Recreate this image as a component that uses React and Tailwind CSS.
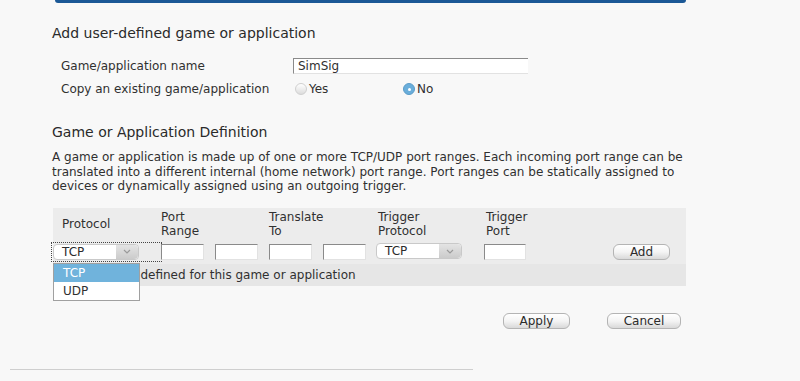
const font = { fontFamily: '"DejaVu Sans", Verdana, sans-serif' };

const TextInput = ({ className = "" }) => (
    <div
        className={`h-[16px] border-t border-l border-t-[#8a8a8a] border-l-[#8a8a8a] border-b border-r border-b-[#e2e2e2] border-r-[#e2e2e2] bg-white ${className}`}
    />
);

const Select = ({ value, focused }) => (
    <div className={`p-px ${focused ? "outline outline-1 outline-dotted outline-[#444]" : ""}`}>
        <div className="flex h-[16px] w-[86px] items-center rounded-[4px] border border-[#c9c9c9] bg-white">
            <span className="flex-1 pl-[8px] text-[12px] leading-none text-[#2b2b2b]">{value}</span>
            <span className="flex h-full w-[22px] items-center justify-center rounded-r-[4px] bg-gradient-to-b from-[#e4e4e4] to-[#cbcbcb]">
                <svg width="8" height="5" viewBox="0 0 8 5">
                    <path d="M1 1 L4 4 L7 1" fill="none" stroke="#9a9a9a" strokeWidth="1.2" />
                </svg>
            </span>
        </div>
    </div>
);

const Button = ({ label, width }) => (
    <div
        className={`flex h-[16px] ${width} items-center justify-center rounded-[6px] border border-[#b4b4b4] bg-gradient-to-b from-white via-[#f4f4f4] to-[#d9d9d9] text-[12px] leading-none text-[#2b2b2b]`}
    >
        {label}
    </div>
);

const Radio = ({ checked }) =>
    checked ? (
        <span className="flex h-[12px] w-[12px] items-center justify-center rounded-full border border-[#5b9cc8] bg-[#6aaedb]">
            <span className="h-[3px] w-[3px] rounded-full bg-white" />
        </span>
    ) : (
        <span className="h-[12px] w-[12px] rounded-full border border-[#d0d0d0] bg-gradient-to-b from-white to-[#dcdcdc]" />
    );

export default function App() {
    return (
        <div className="relative min-h-[381px] w-[800px] bg-[#f8f8f8] text-[#303030]" style={font}>
            <div className="ml-[55px] h-[3px] w-[631px] rounded-b-[3px] bg-[#1b5896]" />

            <div className="ml-[52px] w-[644px]">
                <h2 className="mt-[22px] h-[16px] text-[14px] leading-[16px] text-[#2a2a2a]">
                    Add user-defined game or application
                </h2>

                <div className="mt-[16px] ml-[9px] flex h-[18px] items-center text-[12px]">
                    <span className="w-[232px]">Game/application name</span>
                    <div className="flex h-[16px] w-[235px] items-center border-t border-l border-t-[#8a8a8a] border-l-[#8a8a8a] border-b border-b-[#e2e2e2] bg-white pl-[4px]">
                        SimSig
                    </div>
                </div>
                <div className="mt-[5px] ml-[9px] flex h-[18px] items-center text-[12px]">
                    <span className="w-[234px]">Copy an existing game/application</span>
                    <span className="flex w-[108px] items-center gap-[2px]">
                        <Radio />
                        Yes
                    </span>
                    <span className="flex items-center gap-[2px]">
                        <Radio checked />
                        No
                    </span>
                </div>

                <h2 className="mt-[26px] h-[16px] text-[14px] leading-[16px] text-[#2a2a2a]">
                    Game or Application Definition
                </h2>
                <p className="mt-[10px] text-[12px] leading-[14.5px]">
                    A game or application is made up of one or more TCP/UDP port ranges. Each incoming port range can be
                    translated into a different internal (home network) port range. Port ranges can be statically assigned to
                    devices or dynamically assigned using an outgoing trigger.
                </p>
            </div>

            <div className="relative mt-[14px] ml-[53px] w-[633px] bg-[#ececec] text-[12px]">
                <div className="flex h-[32px] items-center leading-[14px]">
                    <div className="w-[108px] pl-[9px]">Protocol</div>
                    <div className="w-[108px]">Port<br />Range</div>
                    <div className="w-[109px]">Translate<br />To</div>
                    <div className="w-[108px]">Trigger<br />Protocol</div>
                    <div className="w-[108px]">Trigger<br />Port</div>
                </div>
                <div className="flex h-[24px] items-center">
                    <div className="-ml-px w-[109px]">
                        <Select value="TCP" focused />
                    </div>
                    <TextInput className="w-[43px]" />
                    <TextInput className="ml-[11px] w-[43px]" />
                    <TextInput className="ml-[11px] w-[43px]" />
                    <TextInput className="ml-[11px] w-[43px]" />
                    <div className="ml-[9px] -mt-px w-[109px]">
                        <Select value="TCP" />
                    </div>
                    <TextInput className="w-[42px]" />
                    <div className="ml-[87px]">
                        <Button label="Add" width="w-[57px]" />
                    </div>
                </div>
                <div className="flex h-[22px] items-center bg-[#e6e6e6] pl-[34px]">
                    No rules defined for this game or application
                </div>

                <div className="absolute top-[55px] left-0 w-[87px] border border-[#a0a0a0] bg-white text-[12px]">
                    <div className="flex h-[18px] items-center bg-[#70b3dc] pl-[9px] text-white">TCP</div>
                    <div className="flex h-[18px] items-center pl-[9px]">UDP</div>
                </div>
            </div>

            <div className="mt-[27px] ml-[503px] flex gap-[37px]">
                <Button label="Apply" width="w-[67px]" />
                <Button label="Cancel" width="w-[74px]" />
            </div>

            <div className="mt-[40px] ml-[10px] h-px w-[463px] bg-[#cfcfcf]" />
        </div>
    );
}
